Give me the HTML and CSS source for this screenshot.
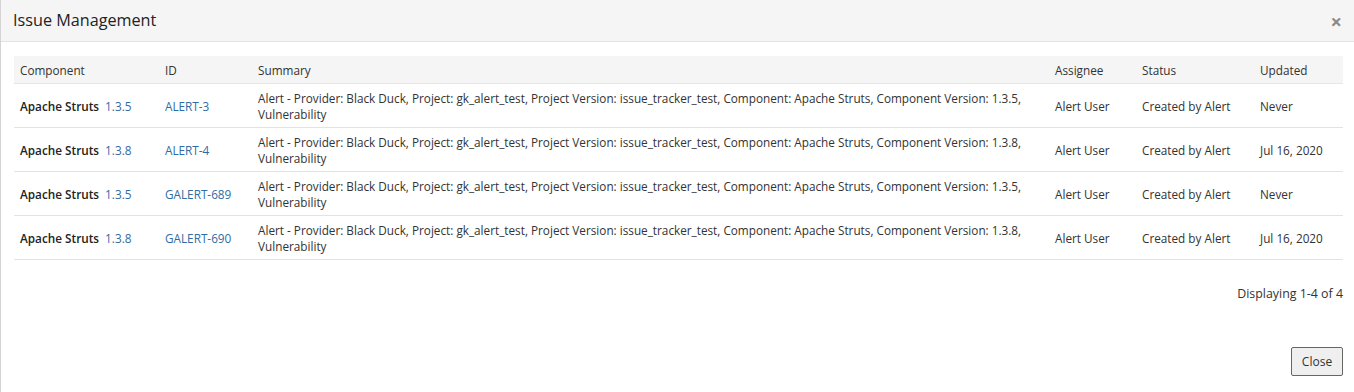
FILE: index.html
```html
<!DOCTYPE html>
<html lang="en">
<head>
    <meta charset="UTF-8">
    <title>Issue Management</title>
    <link rel="stylesheet" href="styles.css">
</head>
<body>
    <div class="modal">
        <div class="modal-header">
            <span class="modal-title">Issue Management</span>
            <span class="modal-close">&times;</span>
        </div>

        <div class="modal-body">
            <table class="issue-table">
                <colgroup>
                    <col class="col-component">
                    <col class="col-id">
                    <col class="col-summary">
                    <col class="col-assignee">
                    <col class="col-status">
                    <col class="col-updated">
                </colgroup>
                <thead>
                    <tr>
                        <th>Component</th>
                        <th>ID</th>
                        <th>Summary</th>
                        <th>Assignee</th>
                        <th>Status</th>
                        <th>Updated</th>
                    </tr>
                </thead>
                <tbody>
                    <tr>
                        <td><span class="component-name">Apache Struts</span> <a class="link" href="#">1.3.5</a></td>
                        <td><a class="link" href="#">ALERT-3</a></td>
                        <td>Alert - Provider: Black Duck, Project: gk_alert_test, Project Version: issue_tracker_test, Component: Apache Struts, Component Version: 1.3.5, Vulnerability</td>
                        <td>Alert User</td>
                        <td>Created by Alert</td>
                        <td>Never</td>
                    </tr>
                    <tr>
                        <td><span class="component-name">Apache Struts</span> <a class="link" href="#">1.3.8</a></td>
                        <td><a class="link" href="#">ALERT-4</a></td>
                        <td>Alert - Provider: Black Duck, Project: gk_alert_test, Project Version: issue_tracker_test, Component: Apache Struts, Component Version: 1.3.8, Vulnerability</td>
                        <td>Alert User</td>
                        <td>Created by Alert</td>
                        <td>Jul 16, 2020</td>
                    </tr>
                    <tr>
                        <td><span class="component-name">Apache Struts</span> <a class="link" href="#">1.3.5</a></td>
                        <td><a class="link" href="#">GALERT-689</a></td>
                        <td>Alert - Provider: Black Duck, Project: gk_alert_test, Project Version: issue_tracker_test, Component: Apache Struts, Component Version: 1.3.5, Vulnerability</td>
                        <td>Alert User</td>
                        <td>Created by Alert</td>
                        <td>Never</td>
                    </tr>
                    <tr>
                        <td><span class="component-name">Apache Struts</span> <a class="link" href="#">1.3.8</a></td>
                        <td><a class="link" href="#">GALERT-690</a></td>
                        <td>Alert - Provider: Black Duck, Project: gk_alert_test, Project Version: issue_tracker_test, Component: Apache Struts, Component Version: 1.3.8, Vulnerability</td>
                        <td>Alert User</td>
                        <td>Created by Alert</td>
                        <td>Jul 16, 2020</td>
                    </tr>
                </tbody>
            </table>

            <div class="table-footer">Displaying 1-4 of 4</div>
        </div>

        <div class="modal-footer">
            <button class="close-button">Close</button>
        </div>
    </div>
</body>
</html>
```

FILE: styles.css
```css
body {
    margin: 0;
    background: white;
    font-family: "Open Sans", "Liberation Sans", sans-serif;
    color: #333;
}

.modal {
    height: 392px;
    border-left: 1px solid #d4d4d4;
    box-sizing: border-box;
    display: flex;
    flex-direction: column;
}

.modal-header {
    height: 41px;
    background: #f5f5f5;
    border-bottom: 1px solid #e3e3e3;
    display: flex;
    align-items: center;
    justify-content: space-between;
    padding: 0 12px 0 12px;
}

.modal-title {
    font-size: 16.2px;
    color: #222;
    padding-bottom: 2px;
}

.modal-close {
    font-size: 20px;
    font-weight: 700;
    color: #8a8a8a;
    line-height: 1;
    margin-top: 2px;
}

.modal-body {
    padding: 14px 10px 0 13px;
}

.issue-table {
    width: 1329px;
    table-layout: fixed;
    border-collapse: collapse;
    font-size: 11.75px;
}

.col-component { width: 145px; }
.col-id { width: 93px; }
.col-summary { width: 797px; }
.col-assignee { width: 87px; }
.col-status { width: 118px; }
.col-updated { width: 89px; }

.issue-table th {
    background: #f5f5f5;
    font-weight: 400;
    text-align: left;
    height: 27px;
    padding: 0 6px;
    border-bottom: 1px solid #e6e6e6;
}

.issue-table td {
    height: 43px;
    padding: 0 6px;
    line-height: 16px;
    border-bottom: 1px solid #e3e3e3;
    vertical-align: middle;
}

.component-name {
    font-weight: 600;
    color: #222;
    margin-right: 3px;
}

.link {
    color: #2f6ca3;
    text-decoration: none;
}

.table-footer {
    width: 1329px;
    text-align: right;
    font-size: 12.4px;
    margin-top: 25px;
}

.modal-footer {
    display: flex;
    justify-content: flex-end;
    padding: 0 11px 0 0;
    margin-top: 45px;
}

.close-button {
    width: 52px;
    height: 29px;
    font-family: "Open Sans", "Liberation Sans", sans-serif;
    font-size: 12px;
    color: #333;
    background: #efefef;
    border: 1px solid #666;
    border-radius: 2px;
    padding: 0;
}
```
